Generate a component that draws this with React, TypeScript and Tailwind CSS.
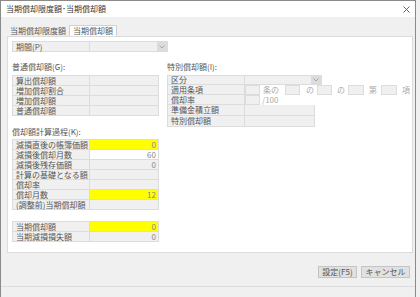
import React from 'react';

const font = { fontFamily: '"Noto Sans CJK JP", "Noto Sans", sans-serif' };

function Cell({ label, w = 'w-[77px]' }: { label: string; w?: string }) {
  return (
    <div className={`${w} h-full shrink-0 bg-[#f0f0f0] border-r border-[#dcdcdc] px-[3px] flex items-center text-[#555] whitespace-nowrap`}>
      {label}
    </div>
  );
}

function Row({ label, value, tone = 'gray' }: { label: string; value?: string; tone?: 'gray' | 'yellow' | 'white' }) {
  const bg = tone === 'yellow' ? 'bg-[#ffff00]' : tone === 'white' ? 'bg-white' : 'bg-[#f0f0f0]';
  return (
    <div className="flex h-[10px] border-b border-[#dcdcdc]">
      <Cell label={label} />
      <div className={`w-[69px] h-full ${bg} flex items-center justify-end pr-[2px] text-[#888]`}>{value}</div>
    </div>
  );
}

function Box({ w = 'w-[15px]' }: { w?: string }) {
  return <div className={`${w} h-[10px] bg-[#f0f0f0] border border-[#dcdcdc]`} />;
}

function Arrow() {
  return (
    <div className="w-[10px] h-full bg-[#dcdcdc] flex items-center justify-center">
      <svg width="6" height="4" viewBox="0 0 6 4"><path d="M0.5 0.5 L3 3 L5.5 0.5" fill="none" stroke="#999" strokeWidth="0.8" /></svg>
    </div>
  );
}

export default function App() {
  return (
    <div className="w-[420px] h-[297px] bg-[#f0f0f0] overflow-hidden text-[8px] leading-none" style={font}>
      <div className="w-[416px] h-[297px] border-l border-t border-r border-[#8a8a8a] flex flex-col">
        {/* Title bar */}
        <div className="h-[16px] bg-white flex items-center justify-between px-[5px] text-[#333]">
          <span>当期償却限度額･当期償却額</span>
          <svg width="7" height="7" viewBox="0 0 7 7"><path d="M0.5 0.5 L6.5 6.5 M6.5 0.5 L0.5 6.5" stroke="#555" strokeWidth="0.9" /></svg>
        </div>

        <div className="flex-1 flex flex-col pl-[6px] pr-[2px]">
          {/* Tabs */}
          <div className="flex items-end h-[19px] text-[#555]">
            <div className="h-[10px] px-[3px] flex items-center">当期償却限度額</div>
            <div className="h-[11px] px-[3px] flex items-center bg-white border border-b-0 border-[#d0d0d0]">当期償却額</div>
          </div>

          {/* Panel */}
          <div className="h-[217px] bg-white border border-[#dcdcdc] px-[4px] pt-[4px]">
            <div className="flex h-[11px] border border-[#dcdcdc] w-[156px]">
              <Cell label="期間(P)" />
              <div className="flex-1 h-full bg-[#f0f0f0] flex justify-end"><Arrow /></div>
            </div>

            <div className="flex mt-[11px]">
              {/* Left column */}
              <div className="w-[147px]">
                <div className="h-[8px] text-[#555] mb-[4px]">普通償却額(G):</div>
                <div className="border border-b-0 border-[#dcdcdc]">
                  <Row label="算出償却額" />
                  <Row label="増加償却割合" />
                  <Row label="増加償却額" />
                  <Row label="普通償却額" />
                </div>

                <div className="h-[8px] text-[#555] mt-[12px] mb-[3px]">償却額計算過程(K):</div>
                <div className="border border-b-0 border-[#dcdcdc]">
                  <Row label="減損直後の帳簿価額" value="0" tone="yellow" />
                  <Row label="減損後償却月数" value="60" tone="white" />
                  <Row label="減損後残存価額" value="0" />
                  <Row label="計算の基礎となる額" />
                  <Row label="償却率" />
                  <Row label="償却月数" value="12" tone="yellow" />
                  <Row label="(調整前)当期償却額" />
                </div>

                <div className="border border-b-0 border-[#dcdcdc] mt-[11px]">
                  <Row label="当期償却額" value="0" tone="yellow" />
                  <Row label="当期減損損失額" value="0" />
                </div>
              </div>

              {/* Right column */}
              <div className="ml-[8px]">
                <div className="h-[8px] text-[#555] mb-[4px]">特別償却額(I):</div>
                <div className="flex flex-col">
                  <div className="flex h-[10px]">
                    <div className="flex w-[155px] border border-[#dcdcdc]">
                      <Cell label="区分" />
                      <div className="flex-1 h-full bg-[#f0f0f0] flex justify-end"><Arrow /></div>
                    </div>
                  </div>
                  <div className="flex h-[10px] items-center text-[#aaa]">
                    <div className="w-[78px] h-full border-l border-b border-[#dcdcdc] flex"><Cell label="適用条項" w="w-[77px]" /></div>
                    <Box />
                    <span className="ml-[3px] w-[22px]">条の</span>
                    <Box />
                    <span className="ml-[6px] w-[11px]">の</span>
                    <Box />
                    <span className="ml-[5px] w-[11px]">の</span>
                    <Box w="w-[16px]" />
                    <span className="ml-[5px] w-[12px]">第</span>
                    <Box w="w-[16px]" />
                    <span className="ml-[5px]">項</span>
                  </div>
                  <div className="flex h-[10px] items-center text-[#aaa]">
                    <div className="w-[78px] h-full border-l border-b border-[#dcdcdc] flex"><Cell label="償却率" w="w-[77px]" /></div>
                    <Box />
                    <span className="ml-[2px]">/100</span>
                  </div>
                  <div className="flex h-[11px] w-[148px] border-l border-r border-b border-[#dcdcdc]">
                    <Cell label="準備金積立額" />
                    <div className="flex-1 bg-[#f0f0f0]" />
                  </div>
                  <div className="flex h-[11px] w-[148px] border-l border-r border-b border-[#dcdcdc]">
                    <Cell label="特別償却額" />
                    <div className="flex-1 bg-[#f0f0f0]" />
                  </div>
                </div>
              </div>
            </div>
          </div>

          {/* Footer buttons */}
          <div className="h-[33px] flex items-center justify-end gap-[4px] pr-[3px] pt-[4px]">
            <button className="w-[39px] h-[12px] bg-[#e1e1e1] border border-[#c4c4c4] text-[#555] text-[8px] leading-none">設定(F5)</button>
            <button className="w-[49px] h-[12px] bg-[#e1e1e1] border border-[#c4c4c4] text-[#555] text-[8px] leading-none">キャンセル</button>
          </div>
        </div>
        <div className="h-[11px] border-t border-[#dcdcdc]" />
      </div>
    </div>
  );
}
